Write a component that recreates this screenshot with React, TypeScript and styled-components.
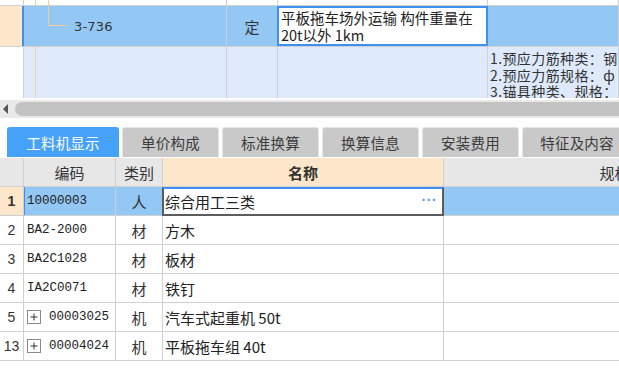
import React from 'react';
import styled, { createGlobalStyle } from 'styled-components';

const LINE = '#d0d0d0';
const SEL = '#93c7f4';
const SEL_LIGHT = '#deeafb';
const PEACH = '#fde6c9';
const ACCENT = '#3d8ff2';
const GUIDE = '#f5cc97';

const GlobalStyle = createGlobalStyle`
  html, body {
    margin: 0;
    padding: 0;
    background: #fff;
  }
  body {
    font-family: "Noto Sans CJK SC", "Noto Sans", sans-serif;
    color: #222;
    overflow: hidden;
  }
  * {
    box-sizing: border-box;
  }
`;

const Screen = styled.div`
  width: 619px;
  height: 387px;
  overflow: hidden;
  display: flex;
  flex-direction: column;
`;

/* ---------- upper grid (quota list) ---------- */

const TopGrid = styled.div`
  height: 98px;
  overflow: hidden;
  flex-shrink: 0;
`;

const TopRow = styled.div<{ $h: number; $bg?: string }>`
  display: flex;
  height: ${({ $h }) => $h}px;
  border-bottom: 1px solid ${LINE};
  background: ${({ $bg }) => $bg || '#fff'};
  flex-shrink: 0;
`;

const Cell = styled.div<{ $w?: number; $bg?: string; $center?: boolean; $top?: boolean }>`
  ${({ $w }) => ($w ? `width: ${$w}px; flex-shrink: 0;` : 'flex: 1; min-width: 0;')}
  background: ${({ $bg }) => $bg || 'transparent'};
  border-right: 1px solid ${LINE};
  display: flex;
  align-items: ${({ $top }) => ($top ? 'flex-start' : 'center')};
  justify-content: ${({ $center }) => ($center ? 'center' : 'flex-start')};
  overflow: hidden;
  white-space: nowrap;
`;

const MarkerCell = styled(Cell)`
  border-right: 2px solid ${ACCENT};
`;

const Guide = styled.span<{ $left: number }>`
  width: 1px;
  align-self: stretch;
  background: ${GUIDE};
  margin-left: ${({ $left }) => $left}px;
  flex-shrink: 0;
`;

const Elbow = styled.span`
  width: 19px;
  height: 20px;
  align-self: flex-start;
  margin-left: 24px;
  border-left: 1px solid ${GUIDE};
  border-bottom: 1px solid ${GUIDE};
  flex-shrink: 0;
`;

const QuotaCode = styled.span`
  margin-left: 7px;
  font-family: "DejaVu Sans", "Liberation Sans", sans-serif;
  font-size: 13px;
  color: #333;
  letter-spacing: 0.2px;
`;

const QuotaType = styled.span`
  font-size: 15px;
  color: #333;
`;

const EditBox = styled.div`
  width: 211px;
  margin-left: -1px;
  flex-shrink: 0;
  background: #fff;
  border: 2px solid ${ACCENT};
  padding: 1px 0 0 2px;
  font-size: 14.5px;
  line-height: 17px;
  color: #222;
  white-space: nowrap;
  overflow: hidden;
`;

const Features = styled.div`
  padding: 3px 0 0 2px;
  font-size: 14px;
  letter-spacing: 0.4px;
  line-height: 16.5px;
  color: #333;
  white-space: nowrap;
`;

/* ---------- horizontal scrollbar ---------- */

const ScrollBar = styled.div`
  margin-top: 2px;
  height: 18px;
  flex-shrink: 0;
  background: #e9e9e9;
  display: flex;
  align-items: center;
  padding-left: 3px;
  overflow: hidden;
`;

const ArrowLeft = styled.span`
  width: 0;
  height: 0;
  border-top: 5px solid transparent;
  border-bottom: 5px solid transparent;
  border-right: 5px solid #555;
  flex-shrink: 0;
`;

const Thumb = styled.div`
  flex: 1;
  height: 14px;
  margin: 0 -20px 0 7px;
  border-radius: 7px;
  background: #c3c3c3;
`;

/* ---------- tabs ---------- */

const TabBar = styled.div`
  margin-top: 9px;
  height: 30px;
  display: flex;
  gap: 3px;
  padding-left: 7px;
  flex-shrink: 0;
  overflow: hidden;
`;

const Tab = styled.div<{ $active?: boolean; $w: number }>`
  width: ${({ $w }) => $w}px;
  flex-shrink: 0;
  height: 30px;
  border-radius: 3px 3px 0 0;
  display: flex;
  align-items: center;
  justify-content: center;
  font-size: 14.5px;
  letter-spacing: 0.2px;
  background: ${({ $active }) => ($active ? '#46a1f8' : '#c9c9c9')};
  color: ${({ $active }) => ($active ? '#fff' : '#3c3c3c')};
  border: 1px solid ${({ $active }) => ($active ? '#46a1f8' : '#e4e4e4')};
  border-bottom: none;
`;

/* ---------- lower grid (labour / material / machine) ---------- */

const Table = styled.div`
  margin-top: 1px;
  display: flex;
  flex-direction: column;
  overflow: hidden;
`;

const Row = styled.div<{ $header?: boolean }>`
  display: flex;
  height: 29px;
  flex-shrink: 0;
  border-bottom: 1px solid ${LINE};
  background: ${({ $header }) => ($header ? '#e7e7e7' : '#fff')};
`;

const HeadCell = styled(Cell)<{ $bold?: boolean }>`
  justify-content: center;
  font-size: 15px;
  color: #333;
  font-weight: ${({ $bold }) => ($bold ? 700 : 400)};
`;

const NumCell = styled(Cell)<{ $bold?: boolean }>`
  justify-content: center;
  font-family: "Liberation Sans", Arial, sans-serif;
  font-size: 14px;
  color: #333;
  font-weight: ${({ $bold }) => ($bold ? 700 : 400)};
`;

const CodeCell = styled(Cell)<{ $selected?: boolean }>`
  padding-left: 3px;
  font-family: "Liberation Mono", "DejaVu Sans Mono", monospace;
  font-size: 12.5px;
  color: #222;
  ${({ $selected }) => ($selected ? `box-shadow: inset 1px 0 0 ${ACCENT};` : '')}
`;

const TypeCell = styled(Cell)`
  justify-content: center;
  font-size: 15px;
  color: #333;
`;

const NameCell = styled(Cell)<{ $editing?: boolean }>`
  padding-left: 2px;
  font-size: 15px;
  color: #222;
  ${({ $editing }) =>
    $editing
      ? `
    width: 282px;
    margin-left: -1px;
    margin-bottom: -1px;
    padding-left: 1px;
    background: #fff;
    border: 2px solid #5c5c5c;
    border-top-color: ${ACCENT};
  `
      : ''}
`;

const Ellipsis = styled.span`
  margin-left: auto;
  padding-right: 5px;
  color: #5a9be2;
  font-family: "Liberation Sans", Arial, sans-serif;
  font-size: 14px;
  font-weight: 700;
  letter-spacing: 0.5px;
  line-height: 1;
  transform: translateY(-2px);
`;

const Expander = styled.svg`
  width: 14px;
  height: 14px;
  flex-shrink: 0;
  margin-right: 8px;
`;

const PlusBox = () => (
  <Expander viewBox="0 0 14 14">
    <rect x="0.5" y="0.5" width="13" height="13" fill="#fff" stroke="#8a8a8a" />
    <path d="M3.5 7h7M7 3.5v7" stroke="#333" strokeWidth="1" />
  </Expander>
);

const COLS = { num: 24, code: 92, type: 47, name: 281, spec: 342 };

type Item = {
  no: string;
  code: string;
  type: string;
  name: string;
  expandable?: boolean;
};

const items: Item[] = [
  { no: '1', code: '10000003', type: '人', name: '综合用工三类' },
  { no: '2', code: 'BA2-2000', type: '材', name: '方木' },
  { no: '3', code: 'BA2C1028', type: '材', name: '板材' },
  { no: '4', code: 'IA2C0071', type: '材', name: '铁钉' },
  { no: '5', code: '00003025', type: '机', name: '汽车式起重机 50t', expandable: true },
  { no: '13', code: '00004024', type: '机', name: '平板拖车组 40t', expandable: true },
];

const tabs = [
  { label: '工料机显示', w: 112 },
  { label: '单价构成', w: 97 },
  { label: '标准换算', w: 97 },
  { label: '换算信息', w: 97 },
  { label: '安装费用', w: 97 },
  { label: '特征及内容', w: 110 },
];

export default function App() {
  return (
    <>
      <GlobalStyle />
      <Screen>
        <TopGrid>
          <TopRow $h={6}>
            <Cell $w={24} />
            <Cell $w={203}>
              <Guide $left={11} />
              <Guide $left={12} />
            </Cell>
            <Cell $w={51} />
            <Cell $w={210} />
            <Cell />
          </TopRow>

          <TopRow $h={41} $bg={SEL}>
            <MarkerCell $w={24} $bg={PEACH} />
            <Cell $w={203}>
              <Elbow />
              <QuotaCode>3-736</QuotaCode>
            </Cell>
            <Cell $w={51} $center>
              <QuotaType>定</QuotaType>
            </Cell>
            <EditBox>
              平板拖车场外运输 构件重量在
              <br />
              20t以外 1km
            </EditBox>
            <Cell />
          </TopRow>

          <TopRow $h={64} $bg={SEL_LIGHT}>
            <Cell $w={24} $bg="#fff" />
            <Cell $w={203}>
              <Guide $left={11} />
            </Cell>
            <Cell $w={51} />
            <Cell $w={210} />
            <Cell $top>
              <Features>
                1.预应力筋种类：钢
                <br />
                2.预应力筋规格：ф
                <br />
                3.锚具种类、规格：1
              </Features>
            </Cell>
          </TopRow>
        </TopGrid>

        <ScrollBar>
          <ArrowLeft />
          <Thumb />
        </ScrollBar>

        <TabBar>
          {tabs.map((t, i) => (
            <Tab key={t.label} $w={t.w} $active={i === 0}>
              {t.label}
            </Tab>
          ))}
        </TabBar>

        <Table>
          <Row $header>
            <HeadCell $w={COLS.num} />
            <HeadCell $w={COLS.code}>编码</HeadCell>
            <HeadCell $w={COLS.type}>类别</HeadCell>
            <HeadCell $w={COLS.name} $bg={PEACH} $bold>
              名称
            </HeadCell>
            <HeadCell $w={COLS.spec}>规格</HeadCell>
          </Row>

          {items.map((it, i) => {
            const selected = i === 0;
            return (
              <Row key={it.no}>
                <NumCell $w={COLS.num} $bg={selected ? PEACH : undefined} $bold={selected}>
                  {it.no}
                </NumCell>
                <CodeCell $w={COLS.code} $bg={selected ? SEL : undefined} $selected={selected}>
                  {it.expandable && <PlusBox />}
                  {it.code}
                </CodeCell>
                <TypeCell $w={COLS.type} $bg={selected ? SEL : undefined}>
                  {it.type}
                </TypeCell>
                <NameCell $w={COLS.name} $editing={selected}>
                  {it.name}
                  {selected && <Ellipsis>···</Ellipsis>}
                </NameCell>
                <Cell $w={COLS.spec} $bg={selected ? SEL : undefined} />
              </Row>
            );
          })}
        </Table>
      </Screen>
    </>
  );
}
